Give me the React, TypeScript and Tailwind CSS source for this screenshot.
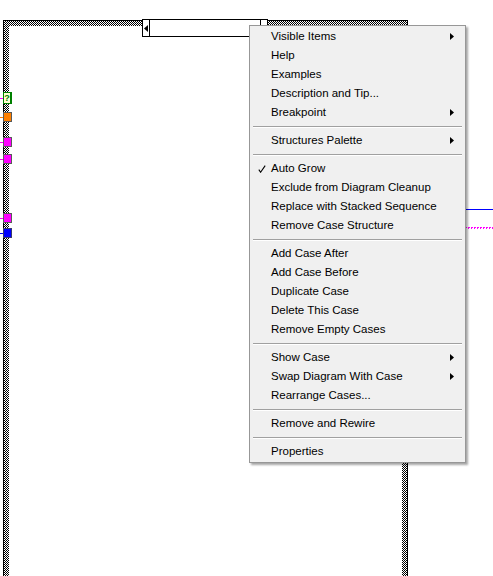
const checker =
  "bg-[repeating-conic-gradient(#000_0_25%,#fff_0_50%)] bg-[length:2px_2px]";

type Item = { label: string; sub?: boolean; checked?: boolean } | "sep";

const items: Item[] = [
  { label: "Visible Items", sub: true },
  { label: "Help" },
  { label: "Examples" },
  { label: "Description and Tip..." },
  { label: "Breakpoint", sub: true },
  "sep",
  { label: "Structures Palette", sub: true },
  "sep",
  { label: "Auto Grow", checked: true },
  { label: "Exclude from Diagram Cleanup" },
  { label: "Replace with Stacked Sequence" },
  { label: "Remove Case Structure" },
  "sep",
  { label: "Add Case After" },
  { label: "Add Case Before" },
  { label: "Duplicate Case" },
  { label: "Delete This Case" },
  { label: "Remove Empty Cases" },
  "sep",
  { label: "Show Case", sub: true },
  { label: "Swap Diagram With Case", sub: true },
  { label: "Rearrange Cases..." },
  "sep",
  { label: "Remove and Rewire" },
  "sep",
  { label: "Properties" },
];

function Arrow() {
  return (
    <svg width="4" height="7" viewBox="0 0 4 7" className="ml-auto mr-[11px]">
      <polygon points="0,0 4,3.5 0,7" fill="#000" />
    </svg>
  );
}

function Check() {
  return (
    <svg width="8" height="8" viewBox="0 0 8 8" className="absolute left-[8px] top-[6px]">
      <path d="M0.8 4.6 L2.6 7.2 L7.2 0.6" stroke="#000" strokeWidth="1.1" fill="none" />
    </svg>
  );
}

function ContextMenu() {
  return (
    <div className="absolute left-[249px] top-[25px] w-[217px] bg-[#f0f0f0] border border-[#979797] py-px shadow-[2px_2px_2px_rgba(0,0,0,0.35)]">
      {items.map((it, i) =>
        it === "sep" ? (
          <div key={i} className="h-[9px] flex items-center px-[3px]">
            <div className="w-full border-t border-[#a0a0a0] border-b border-b-white" />
          </div>
        ) : (
          <div key={i} className="relative h-[19px] pl-[21px] flex items-center text-[11.5px] text-black leading-none">
            {it.checked && <Check />}
            <span>{it.label}</span>
            {it.sub && <Arrow />}
          </div>
        )
      )}
    </div>
  );
}

// one input tunnel on the left wall of the structure, with its wire stub
function Tunnel({ fill, border, wire, className = "" }: { fill: string; border: string; wire: string; className?: string }) {
  return (
    <div className={`flex items-center ${className}`}>
      <div className={`w-[3px] h-px ${wire}`} />
      <div className={`w-[9px] h-[10px] border ${fill} ${border}`} />
    </div>
  );
}

export default function App() {
  return (
    <div className="relative w-[493px] h-[576px] bg-white overflow-hidden font-['Liberation_Sans',Arial,sans-serif]">
      {/* case structure frame */}
      <div className={`ml-[3px] mt-[20px] w-[405px] h-[570px] border-t border-l border-r border-black pt-[5px] px-[5px] ${checker}`}>
        <div className="w-full h-full bg-white" />
      </div>

      {/* case selector */}
      <div className="absolute left-[142px] top-[19px] w-[126px] h-[18px] bg-white border border-black flex">
        <div className="w-[7px] border-r border-black flex items-center justify-center">
          <svg width="5" height="7" viewBox="0 0 5 7">
            <polygon points="0,3.5 4,0 4,7" fill="#000" />
          </svg>
        </div>
        <div className="flex-1" />
        <div className="w-[7px] border-l border-black" />
      </div>

      {/* tunnels on left wall */}
      <div className="absolute left-0 top-[92px] flex flex-col">
        <div className="flex items-center">
          <div className="w-[3px] h-px bg-[#ff00ff]" />
          <div className="w-[9px] h-[12px] bg-[#ffffd0] border border-[#008000] border-r-2 flex items-center justify-center text-[9px] font-bold text-[#008000] leading-none">
            ?
          </div>
        </div>
        <Tunnel className="mt-[8px]" fill="bg-[#ff8000]" border="border-[#5a5a5a]" wire="bg-[#ff8000]" />
        <Tunnel className="mt-[15px]" fill="bg-[#ff00ff]" border="border-[#5a5a5a]" wire="bg-[#ff00ff]" />
        <Tunnel className="mt-[7px]" fill="bg-[#ff00ff]" border="border-[#5a5a5a]" wire="bg-[#ff00ff]" />
        <Tunnel className="mt-[49px]" fill="bg-[#ff00ff]" border="border-[#5a5a5a]" wire="bg-[#ff00ff]" />
        <Tunnel className="mt-[5px]" fill="bg-[#0000ff]" border="border-[#3a3a6a]" wire="bg-[#0000ff]" />
      </div>

      {/* wires leaving to the right */}
      <div className="absolute left-[408px] top-[209px] w-[85px] flex flex-col">
        <div className="h-px bg-[#0000ff]" />
        <div className="mt-[17px] h-px bg-[linear-gradient(90deg,#ff00ff_66%,transparent_66%)] bg-[length:3px_1px]" />
        <div className="h-px bg-[linear-gradient(90deg,#ff00ff_33%,transparent_33%)] bg-[length:3px_1px]" />
      </div>

      <ContextMenu />
    </div>
  );
}
